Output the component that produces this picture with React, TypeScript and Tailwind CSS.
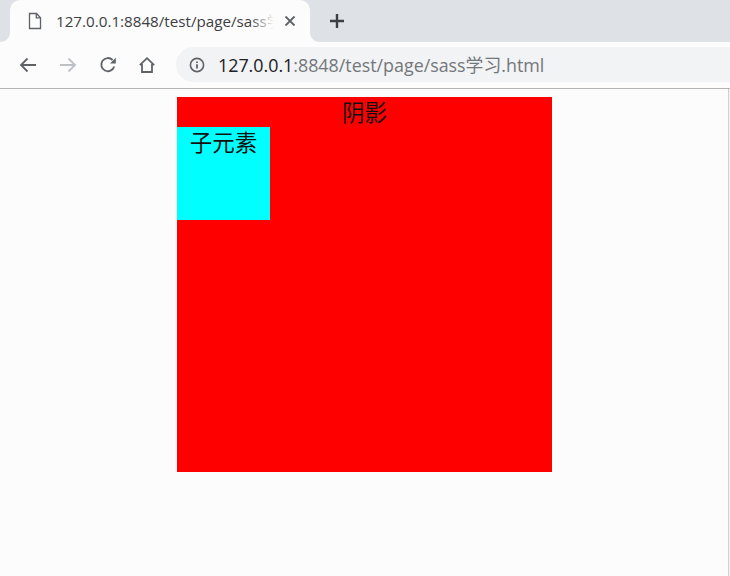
import React from "react";

const font = { fontFamily: '"Liberation Sans", "Noto Sans CJK SC", sans-serif' };
const uiFont = { fontFamily: '"Open Sans", "Noto Sans CJK SC", sans-serif' };

function Corner({ side }: { side: "left" | "right" }) {
  const d = side === "left" ? "M10 0 C10 6 6 10 0 10 L10 10 Z" : "M0 0 C0 6 4 10 10 10 L0 10 Z";
  return (
    <svg width="10" height="10" viewBox="0 0 10 10" className={side === "left" ? "absolute bottom-0 -left-[10px]" : "absolute bottom-0 -right-[10px]"}>
      <path d={d} fill="#fcfcfc" />
    </svg>
  );
}

export default function App() {
  return (
    <div className="w-[730px] h-[576px] overflow-hidden flex flex-col bg-[#fcfcfc]" style={font}>
      <div className="h-[42px] bg-[#dee1e6] flex items-end pl-[10px] shrink-0">
        <div className="relative w-[300px] h-[42px] bg-[#fcfcfc] rounded-t-[10px] flex items-center">
          <Corner side="left" />
          <Corner side="right" />
          <svg width="16" height="18" viewBox="0 0 16 18" fill="none" stroke="#5f6368" strokeWidth="1.3" className="ml-[17px] mb-[1px] shrink-0">
            <path d="M2.5 1.5h7l4 4.2v10.8h-11z" />
            <path d="M9.3 1.5v4.3h4.2" />
          </svg>
          <div className="relative ml-[13px] w-[218px] overflow-hidden whitespace-nowrap text-[15.2px] leading-[20px] text-[#3c4043] mb-[1px]" style={uiFont}>
            127.0.0.1:8848/test/page/sass学习.html
            <div className="absolute top-0 right-0 bottom-0 w-[24px] bg-gradient-to-r from-transparent to-[#fcfcfc]" />
          </div>
          <svg width="12" height="12" viewBox="0 0 12 12" stroke="#5f6368" strokeWidth="1.8" className="ml-[10px] mb-[1px] shrink-0">
            <path d="M1.5 1.5l9 9M10.5 1.5l-9 9" />
          </svg>
        </div>
        <svg width="16" height="16" viewBox="0 0 16 16" stroke="#3c4043" strokeWidth="2.4" className="ml-[19px] mb-[13px] shrink-0">
          <path d="M8 1v14M1 8h14" />
        </svg>
      </div>

      <div className="h-[46px] flex items-center shrink-0 bg-[#fcfcfc] border-b border-[#b4b4b4] box-content">
        <svg width="18" height="16" viewBox="0 0 18 16" fill="none" stroke="#5f6368" strokeWidth="1.8" className="ml-[19px] shrink-0">
          <path d="M17 8H2M8.5 1.5L2 8l6.5 6.5" />
        </svg>
        <svg width="18" height="16" viewBox="0 0 18 16" fill="none" stroke="#bdc1c6" strokeWidth="1.8" className="ml-[22px] shrink-0">
          <path d="M1 8h15M9.5 1.5L16 8l-6.5 6.5" />
        </svg>
        <svg width="18" height="18" viewBox="0 0 18 18" fill="none" className="ml-[22px] shrink-0">
          <path d="M15.2 10.5A6.6 6.6 0 1 1 13.6 4" stroke="#5f6368" strokeWidth="1.8" />
          <path d="M11 7.6h5.8V1.8z" fill="#5f6368" />
        </svg>
        <svg width="18" height="18" viewBox="0 0 18 18" fill="none" stroke="#5f6368" strokeWidth="1.8" className="ml-[21px] shrink-0">
          <path d="M1.8 9.2L9 2.2l7.2 7M4 8v8h10V8" />
        </svg>
        <div className="ml-[20px] h-[35px] flex-1 rounded-l-[18px] bg-[#f1f3f4] flex items-center mb-[1px]">
          <svg width="16" height="16" viewBox="0 0 16 16" fill="none" className="ml-[13px] shrink-0">
            <circle cx="8" cy="8" r="6.6" stroke="#5f6368" strokeWidth="1.6" />
            <path d="M8 7.2v4.2M8 4.4v1.6" stroke="#5f6368" strokeWidth="1.8" />
          </svg>
          <div className="ml-[13px] text-[17.85px] leading-[24px] whitespace-nowrap text-[#74777b]" style={uiFont}>
            <span className="text-[#202124]">127.0.0.1</span>:8848/test/page/sass学习.html
          </div>
        </div>
      </div>

      <div className="flex-1 flex">
        <div className="w-[728px] pt-[8px]">
          <div className="w-[375px] h-[375px] ml-[177px] bg-[#ff0000] text-center text-[22.5px] leading-[30px] text-[#111]">
            <div className="h-[30px] relative top-[2px]">阴影</div>
            <div className="w-[93px] h-[93px] bg-[#00ffff] relative">
              <div className="relative top-[2px]">子元素</div>
            </div>
          </div>
        </div>
        <div className="w-px bg-[#cfcfcf]" />
        <div className="w-px bg-[#f4f4f4]" />
      </div>
    </div>
  );
}
